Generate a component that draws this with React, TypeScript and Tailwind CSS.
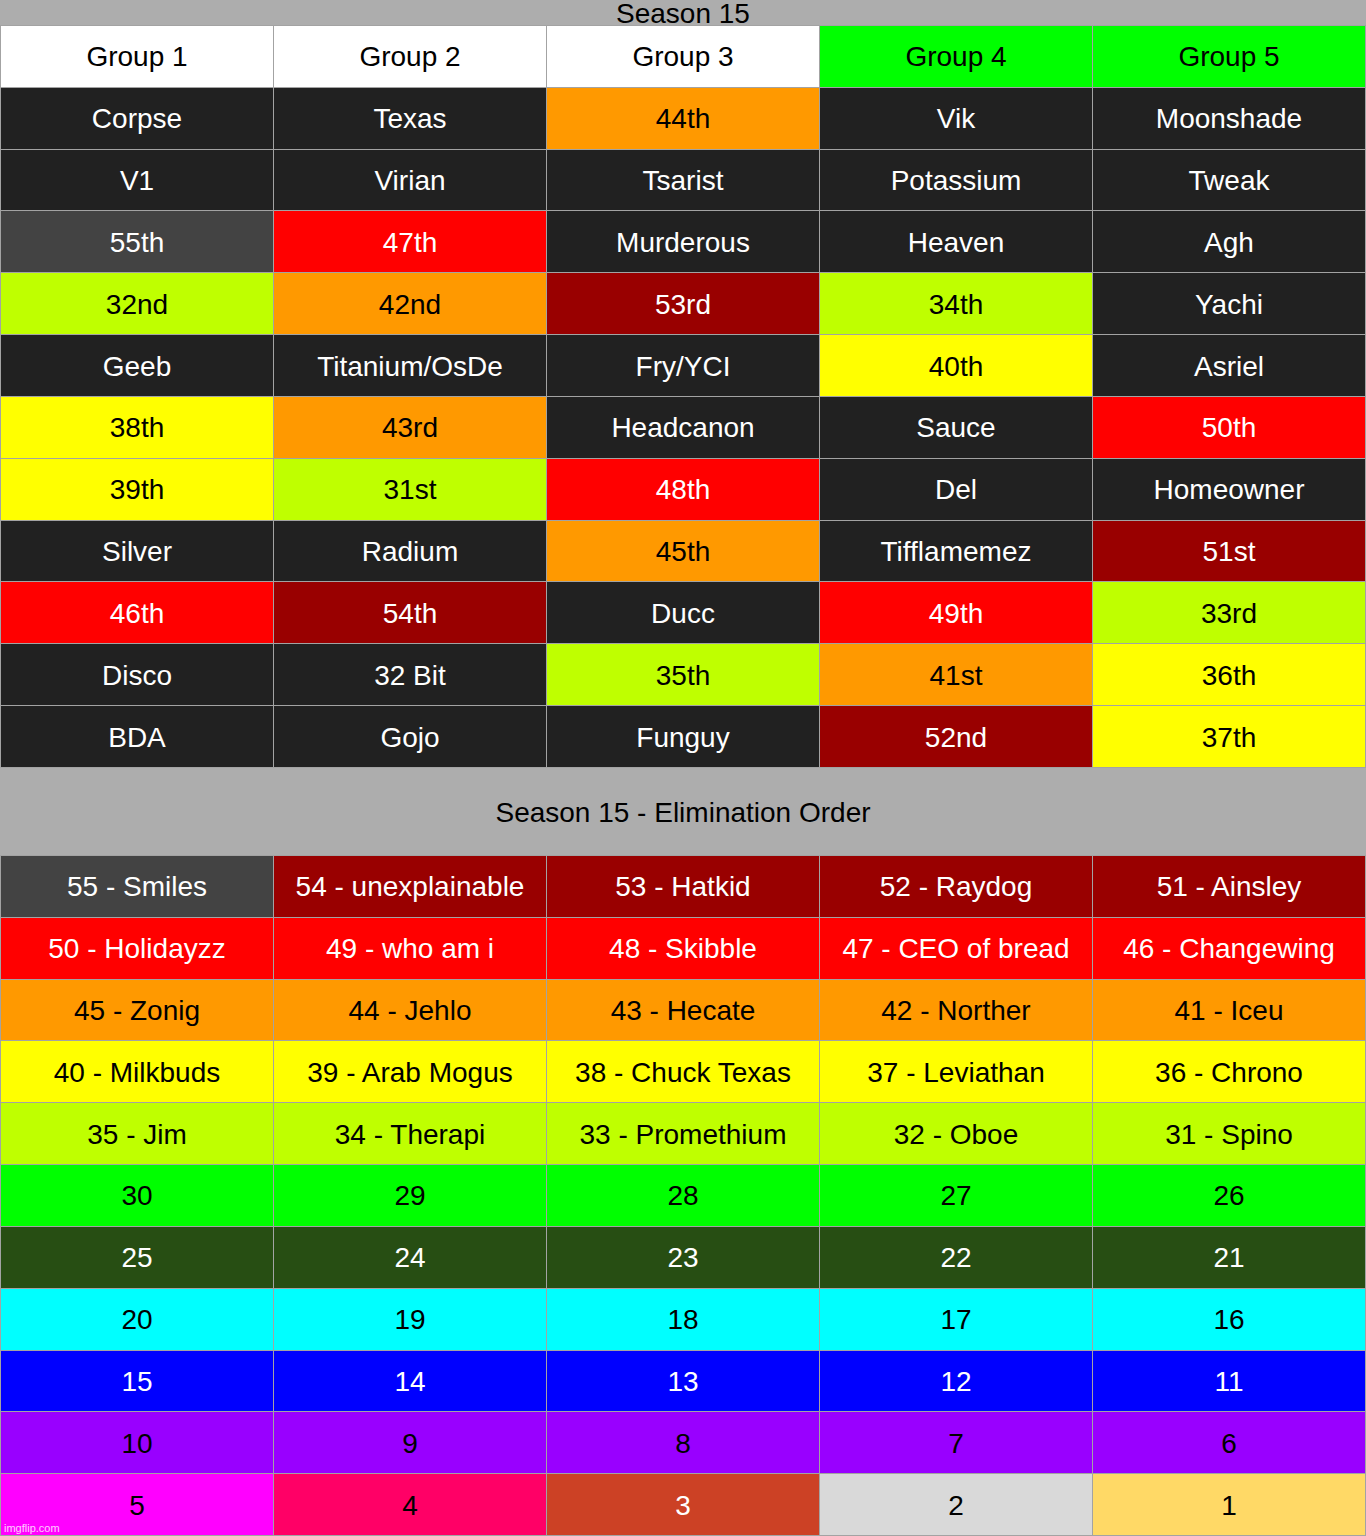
import React from 'react';

// Cell colour kinds -> tailwind classes (written out in full)
const kinds: Record<string, string> = {
  W: 'bg-white text-black',
  D: 'bg-[#212121] text-white',
  G: 'bg-[#434343] text-white',
  O: 'bg-[#ff9900] text-black',
  R: 'bg-[#ff0000] text-white',
  DR: 'bg-[#990000] text-white',
  L: 'bg-[#bfff00] text-black',
  Y: 'bg-[#ffff00] text-black',
  GR: 'bg-[#00ff00] text-black',
  DG: 'bg-[#274e13] text-white',
  C: 'bg-[#00ffff] text-black',
  B: 'bg-[#0000ff] text-white',
  P: 'bg-[#9900ff] text-black',
  M: 'bg-[#ff00ff] text-black',
  PK: 'bg-[#ff0066] text-black',
  BR: 'bg-[#cc4125] text-white',
  LG: 'bg-[#d9d9d9] text-black',
  GO: 'bg-[#ffd966] text-black',
};

type Cell = [string, string];

const groups: Cell[][] = [
  [['Group 1', 'W'], ['Group 2', 'W'], ['Group 3', 'W'], ['Group 4', 'GR'], ['Group 5', 'GR']],
  [['Corpse', 'D'], ['Texas', 'D'], ['44th', 'O'], ['Vik', 'D'], ['Moonshade', 'D']],
  [['V1', 'D'], ['Virian', 'D'], ['Tsarist', 'D'], ['Potassium', 'D'], ['Tweak', 'D']],
  [['55th', 'G'], ['47th', 'R'], ['Murderous', 'D'], ['Heaven', 'D'], ['Agh', 'D']],
  [['32nd', 'L'], ['42nd', 'O'], ['53rd', 'DR'], ['34th', 'L'], ['Yachi', 'D']],
  [['Geeb', 'D'], ['Titanium/OsDe', 'D'], ['Fry/YCI', 'D'], ['40th', 'Y'], ['Asriel', 'D']],
  [['38th', 'Y'], ['43rd', 'O'], ['Headcanon', 'D'], ['Sauce', 'D'], ['50th', 'R']],
  [['39th', 'Y'], ['31st', 'L'], ['48th', 'R'], ['Del', 'D'], ['Homeowner', 'D']],
  [['Silver', 'D'], ['Radium', 'D'], ['45th', 'O'], ['Tifflamemez', 'D'], ['51st', 'DR']],
  [['46th', 'R'], ['54th', 'DR'], ['Ducc', 'D'], ['49th', 'R'], ['33rd', 'L']],
  [['Disco', 'D'], ['32 Bit', 'D'], ['35th', 'L'], ['41st', 'O'], ['36th', 'Y']],
  [['BDA', 'D'], ['Gojo', 'D'], ['Funguy', 'D'], ['52nd', 'DR'], ['37th', 'Y']],
];

const row = (names: string[], kind: string): Cell[] => names.map((n) => [n, kind]);

const elimination: Cell[][] = [
  [['55 - Smiles', 'G'], ['54 - unexplainable', 'DR'], ['53 - Hatkid', 'DR'], ['52 - Raydog', 'DR'], ['51 - Ainsley', 'DR']],
  row(['50 - Holidayzz', '49 - who am i', '48 - Skibble', '47 - CEO of bread', '46 - Changewing'], 'R'),
  row(['45 - Zonig', '44 - Jehlo', '43 - Hecate', '42 - Norther', '41 - Iceu'], 'O'),
  row(['40 - Milkbuds', '39 - Arab Mogus', '38 - Chuck Texas', '37 - Leviathan', '36 - Chrono'], 'Y'),
  row(['35 - Jim', '34 - Therapi', '33 - Promethium', '32 - Oboe', '31 - Spino'], 'L'),
  row(['30', '29', '28', '27', '26'], 'GR'),
  row(['25', '24', '23', '22', '21'], 'DG'),
  row(['20', '19', '18', '17', '16'], 'C'),
  row(['15', '14', '13', '12', '11'], 'B'),
  row(['10', '9', '8', '7', '6'], 'P'),
  [['5', 'M'], ['4', 'PK'], ['3', 'BR'], ['2', 'LG'], ['1', 'GO']],
];

function Table({ rows, className }: { rows: Cell[][]; className: string }) {
  return (
    <div className={`grid grid-cols-5 gap-px p-px bg-[#a3a3a3] ${className}`}>
      {rows.flat().map(([text, kind], i) => (
        <div key={i} className={`flex items-center justify-center pt-[2px] whitespace-nowrap ${kinds[kind]}`}>
          {text}
        </div>
      ))}
    </div>
  );
}

export default function App() {
  return (
    <div
      className="relative w-[1366px] h-[1536px] overflow-hidden bg-[#adadad] text-[28px] leading-none"
      style={{ fontFamily: '"Liberation Sans", Arial, sans-serif' }}
    >
      <div className="h-[25px] flex items-start justify-center text-black">Season 15</div>
      <Table rows={groups} className="h-[743px] grid-rows-12" />
      <div className="h-[87px] flex items-center justify-center pt-[2px] text-black">Season 15 - Elimination Order</div>
      <Table rows={elimination} className="h-[681px] grid-rows-11" />

      {/* watermark */}
      <div className="absolute left-[4px] bottom-[2px] text-[11px] text-white/80">imgflip.com</div>
    </div>
  );
}
